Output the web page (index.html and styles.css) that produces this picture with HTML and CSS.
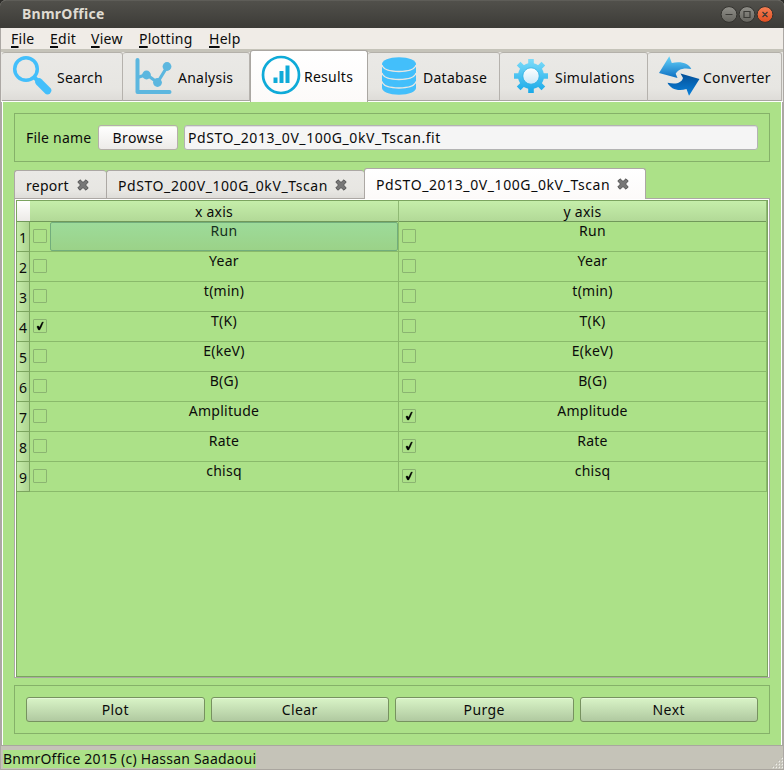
FILE: index.html
```html
<!DOCTYPE html>
<html lang="en">
<head>
<meta charset="utf-8">
<title>BnmrOffice</title>
<link rel="stylesheet" href="styles.css">
</head>
<body>
<svg class="defs" width="0" height="0">
  <defs>
    <symbol id="close" viewBox="0 0 12 12"><path d="M3 .8 6 3.500 9 .8 11.200 3 8.500 6l2.700 3L9 11.200 6 8.500l-3 2.700L.8 9l2.700-3L.8 3z" fill="#777" stroke="#555" stroke-width="1" stroke-linejoin="round"/></symbol>
    <symbol id="tick" viewBox="0 0 14 14"><path d="M4.3 7.1 6 7.3l.5 1.2L9 3.3l1.4-.3L8.3 8 6.700 11H5.500L4 8z" fill="#000" stroke="#000" stroke-width=".4"/></symbol>
  </defs>
</svg>
<div class="window">
  <header class="titlebar">
    <span class="title">BnmrOffice</span>
    <svg class="controls" width="54" height="18" viewBox="0 0 54 18">
      <defs>
        <linearGradient id="btn" x2="0" y2="1"><stop stop-color="#91908a"/><stop offset="1" stop-color="#65645e"/></linearGradient>
        <linearGradient id="btnx" x2="0" y2="1"><stop stop-color="#f58055"/><stop offset="1" stop-color="#e04d20"/></linearGradient>
      </defs>
      <g stroke="#32312d"><circle cx="9" cy="8.500" r="7.900" fill="url(#btn)"/><circle cx="27" cy="8.500" r="7.900" fill="url(#btn)"/><circle cx="45" cy="8.500" r="7.900" fill="url(#btnx)"/></g>
      <path d="M5.500 8.500h7M24 5.500h6v6h-6zM42.500 6l5 5m0-5-5 5" fill="none" stroke="#3c3b37" stroke-width="1.2"/>
    </svg>
  </header>
  <nav class="menubar">
    <span class="m1"><u>F</u>ile</span><span class="m2"><u>E</u>dit</span><span class="m3"><u>V</u>iew</span><span class="m4"><u>P</u>lotting</span><span class="m5"><u>H</u>elp</span>
  </nav>
  <div class="maintabs">
    <div class="tab search">
      <svg width="42" height="42" viewBox="0 0 42 42"><circle cx="14" cy="14" r="11.3" fill="none" stroke="#43bffb" stroke-width="3.5"/><path d="m22 22 4 4" stroke="#43bffb" stroke-width="4"/><path d="m27 27 8.500 8.500" stroke="#43bffb" stroke-width="7.500" stroke-linecap="round"/></svg>
      <span>Search</span>
    </div>
    <div class="tab analysis">
      <svg width="38" height="38" viewBox="0 0 38 38" stroke="#5cb7df" fill="none" stroke-linecap="round" stroke-linejoin="round"><path d="M2.500 3v32h32" stroke-width="4"/><path d="m4 20 7.500-2.500 11 8L32 10" stroke-width="3.200"/><g fill="#5cb7df" stroke="none"><circle cx="11.500" cy="18" r="4.400"/><circle cx="22.500" cy="25.500" r="4.400"/><circle cx="32" cy="9.500" r="4.400"/></g></svg>
      <span>Analysis</span>
    </div>
    <div class="tab results active">
      <svg width="40" height="40" viewBox="0 0 40 40"><circle cx="20" cy="20" r="18" fill="none" stroke="#0eaad8" stroke-width="2.700"/><path d="M12.500 22.500h4v5.500h-4zM18.500 16h4v12h-4zM24.500 10.500h4V28h-4z" fill="#0eaad8"/></svg>
      <span>Results</span>
    </div>
    <div class="tab database">
      <svg width="34" height="38" viewBox="0 0 34 38"><path d="M0 7C0 3.500 7 .3 17 .3S34 3.500 34 7v24c0 3.500-7 6.700-17 6.700S0 34.500 0 31z" fill="#43bffb"/><path d="M0 8c1 4.500 8 6.500 17 6.500S33 12.500 34 8M0 16c1 4.500 8 6.500 17 6.500s16-2 17-6.500M0 24.500C1 29 8 31 17 31s16-2 17-6.500" fill="none" stroke="#e8e7e3" stroke-width="1.300"/></svg>
      <span>Database</span>
    </div>
    <div class="tab simulations">
      <svg width="34" height="34" viewBox="-17 -17 34 34">
        <defs>
          <linearGradient id="gear" gradientUnits="userSpaceOnUse" x1="0" x2="0" y1="-17" y2="17"><stop stop-color="#7ddcf9"/><stop offset="1" stop-color="#18a9e8"/></linearGradient>
          <linearGradient id="hub" x2="0" y2="1"><stop stop-color="#fff"/><stop offset="1" stop-color="#cbe7f7"/></linearGradient>
        </defs>
        <g fill="url(#gear)"><circle r="13"/><path d="M-2.800-17h5.600v6h-5.600zM-2.800 11h5.600v6h-5.600zM-17-2.800h6v5.600h-6zM11-2.800h6v5.600h-6zM-10.500-14.200l5 5-3.700 3.700-5-5zM10.500-14.200l3.700 3.700-5 5-3.700-3.700zM-14.200 10.500l5-5 3.700 3.700-5 5zM14.200 10.500l-3.700 3.700-5-5 3.700-3.700z"/></g>
        <circle r="8.200" fill="url(#hub)" stroke="#2aaee2" stroke-width=".8"/>
      </svg>
      <span>Simulations</span>
    </div>
    <div class="tab converter">
      <svg width="41" height="40" viewBox="0 0 41 40">
        <defs>
          <linearGradient id="up" x2="0" y2="1"><stop stop-color="#66d5fb"/><stop offset="1" stop-color="#0d6fc2"/></linearGradient>
          <linearGradient id="down" x2="0" y2="1"><stop stop-color="#044f97"/><stop offset="1" stop-color="#0a82dc"/></linearGradient>
        </defs>
        <path d="M10.300.2 0 17l18.500 5-1.800-4.200c2-4 7-6.500 15.600-4.800C30 7.500 22 4.800 12.800 7z" fill="url(#up)"/>
        <path d="m30 39.800 10.500-16.900-19-5.400 2.500 4.500c-1.500 5-7 6.700-15.500 4.700C11.500 33 19 35.500 27.500 33z" fill="url(#down)"/>
      </svg>
      <span>Converter</span>
    </div>
  </div>
  <main class="page">
    <section class="group file">
      <label class="t-file">File name</label>
      <button class="browse"><span>Browse</span></button>
      <div class="field"><span>PdSTO_2013_0V_100G_0kV_Tscan.fit</span></div>
    </section>
    <div class="doctabs">
      <div class="doc d1"><span>report</span><svg width="12" height="12"><use href="#close"/></svg></div>
      <div class="doc d2"><span>PdSTO_200V_100G_0kV_Tscan</span><svg width="12" height="12"><use href="#close"/></svg></div>
      <div class="doc d3 active"><span>PdSTO_2013_0V_100G_0kV_Tscan</span><svg width="12" height="12"><use href="#close"/></svg></div>
    </div>
    <div class="pane">
      <div class="grid">
        <div class="row head"><i class="corner"></i><b class="c1">x axis</b><b class="c2">y axis</b></div>
        <div class="row"><i>1</i><div class="cell"><em></em><p class="sel"><span>Run</span></p></div><div class="cell"><em></em><p><span>Run</span></p></div></div>
        <div class="row"><i>2</i><div class="cell"><em></em><p>Year</p></div><div class="cell"><em></em><p>Year</p></div></div>
        <div class="row"><i>3</i><div class="cell"><em></em><p>t(min)</p></div><div class="cell"><em></em><p>t(min)</p></div></div>
        <div class="row"><i>4</i><div class="cell"><em><svg width="14" height="14"><use href="#tick"/></svg></em><p>T(K)</p></div><div class="cell"><em></em><p>T(K)</p></div></div>
        <div class="row"><i>5</i><div class="cell"><em></em><p>E(keV)</p></div><div class="cell"><em></em><p>E(keV)</p></div></div>
        <div class="row"><i>6</i><div class="cell"><em></em><p>B(G)</p></div><div class="cell"><em></em><p>B(G)</p></div></div>
        <div class="row"><i>7</i><div class="cell"><em></em><p>Amplitude</p></div><div class="cell"><em><svg width="14" height="14"><use href="#tick"/></svg></em><p>Amplitude</p></div></div>
        <div class="row"><i>8</i><div class="cell"><em></em><p>Rate</p></div><div class="cell"><em><svg width="14" height="14"><use href="#tick"/></svg></em><p>Rate</p></div></div>
        <div class="row"><i>9</i><div class="cell"><em></em><p>chisq</p></div><div class="cell"><em><svg width="14" height="14"><use href="#tick"/></svg></em><p>chisq</p></div></div>
      </div>
    </div>
    <section class="group actions">
      <button>Plot</button><button>Clear</button><button>Purge</button><button>Next</button>
    </section>
  </main>
  <footer class="status">
    <span>BnmrOffice 2015 (c) Hassan Saadaoui</span>
    <svg width="12" height="12" viewBox="0 0 12 12"><path d="M10 1.500h2M7 4.500h2M10 4.500h2M4 7.500h2M7 7.500h2M10 7.500h2M1 10.500h2M4 10.500h2M7 10.500h2M10 10.500h2" stroke="#f0efe9" stroke-width="1.500"/><path d="M10 1h1M7 4h1M10 4h1M4 7h1M7 7h1M10 7h1M1 10h1M4 10h1M7 10h1M10 10h1" stroke="#a3a198"/></svg>
  </footer>
</div>
</body>
</html>
```
FILE: styles.css
```css
* { box-sizing: border-box; }
body { margin: 0; font: 14px/20px "Noto Sans", "Open Sans", sans-serif; letter-spacing: .25px; color: #0b0b0b; background: #aca8a4; }
svg { display: block; flex: none; }
.defs { position: absolute; }
.window { width: 784px; height: 770px; display: flex; flex-direction: column; overflow: hidden; white-space: nowrap; }
.titlebar { height: 28px; flex: none; display: flex; justify-content: space-between; align-items: center; padding: 0 10px 0 22px; background: linear-gradient(#51504b, #3c3b37); border-top: 1px solid #5e5d58; border-radius: 6px 6px 0 0; box-shadow: 0 0 0 6px #2d2c29; z-index: 1; clip-path: inset(0); }
.title { color: #dfdbd2; font-weight: 700; font-size: 14px; margin-top: -1px; }
.menubar { height: 21px; flex: none; margin: 0 1px; background: #f0ece7; display: flex; padding: 1px 0 0 10px; z-index: 2; }
.menubar span { flex: none; }
.menubar u { text-decoration-thickness: 2px; text-underline-offset: 2px; text-decoration-skip-ink: none; }
.m1 { width: 39px; } .m2 { width: 41px; } .m3 { width: 48px; } .m4 { width: 70px; }
.maintabs { height: 53px; flex: none; display: flex; align-items: flex-end; padding: 0 1px; background: linear-gradient(#c5c3b9 0 3px, #e8e7e3 3px 52px, #fff 52px); margin: 0 1px; }
.tab { height: 49px; margin-bottom: 1px; display: flex; align-items: center; border-top: 1px solid #b4b1aa; border-bottom: 1px solid #a9a6a1; border-right: 1px solid #b5b2ad; background: linear-gradient(#eae9e6, #e7e6e2 75%, #dedcd8); border-radius: 3px 3px 0 0; }
.tab svg { margin-top: -1px; }
.tab span { margin-top: 3px; }
.search { width: 121px; padding-left: 10px; }
.search span { margin-left: 3px; }
.analysis { width: 127px; padding-left: 12px; }
.analysis span { margin-left: 5px; }
.results { width: 118px; padding-left: 10px; }
.results span { margin: 2px 0 0 3px; }
.tab.active { height: 52px; margin-bottom: 0; padding-bottom: 2px; border: 1px solid #aaa7a2; border-width: 1px 1px 0; background: linear-gradient(#fff, #fcfaf9); }
.database { width: 132px; padding-left: 14px; }
.database span { margin-left: 7px; }
.simulations { width: 148px; padding-left: 14px; }
.simulations span { margin-left: 7px; }
.converter { flex: 1; padding-left: 11px; }
.converter span { margin-left: 3px; }
.page { flex: none; height: 643px; margin: 0 2px; padding: 11px 11px 0; border: 1px solid #fff; border-width: 0 1px; background: #ace188; }
.group { height: 49px; border: 1px solid #85b169; padding: 0 11px; display: flex; align-items: center; }
.file label { width: 72px; letter-spacing: .2px; }
button { font: inherit; letter-spacing: inherit; color: inherit; padding: 0; height: 25px; border: 1px solid #779260; border-radius: 3px; background: linear-gradient(#d9f4c7, #b0c9a0); box-shadow: inset 0 1px #e5f8d8; line-height: 23px; }
.browse { width: 80px; border-color: #b5afaa; background: linear-gradient(#fff, #edebe8); flex: none; letter-spacing: .4px; }
.field { flex: 1; margin-left: 6px; height: 25px; border: 1px solid #b3b3b3; border-radius: 3px; background: #f5f5f5; padding: 0 3px; line-height: 24px; letter-spacing: .56px; box-shadow: inset 0 1px #e0e0e0; }
.doctabs { position: relative; z-index: 1; margin-top: 6px; height: 31px; display: flex; align-items: flex-end; }
.doc { height: 29px; border: 1px solid #aca8a4; border-right-width: 0; border-radius: 3px 3px 0 0; background: linear-gradient(#eae9e6, #e7e6e2 75%, #dedcd8); display: flex; align-items: center; padding: 2px 17px 0 11px; justify-content: space-between; }
.doc svg { margin-top: -2px; }
.d1 { width: 92px; } .d2 { width: 258px; letter-spacing: .58px; }
.doc.active { width: 282px; height: 31px; border-width: 1px 1px 0; padding-bottom: 1px; padding-right: 16px; letter-spacing: .59px; background: linear-gradient(#fff, #fcfaf9); }
.pane { height: 480px; border: 1px solid #aca8a4; margin-top: -1px; padding: 1px 1px 0; background: #fff; }
.grid { height: 477px; border: 1px solid #7ba45f; background: #ace188; }
.row { height: 30px; display: grid; grid-template-columns: 13px 369px 1fr; }
.row i { font-style: normal; border-right: 1px solid #7ba45f; border-bottom: 1px solid #7ba45f; background: linear-gradient(90deg, #c5eca9, #aed491); text-align: center; line-height: 32px; height: 30px; letter-spacing: 0; }
.head { height: 21px; background: linear-gradient(#c5eeaa, #b2d997); border-bottom: 1px solid #71985a; }
.head b { font-weight: 400; text-align: center; line-height: 21px; border-right: 1px solid #8fb974; }
.head .corner { height: 20px; background: linear-gradient(#fff, #eceae7); border: 0; }
.cell { display: flex; border-right: 1px solid #8aba6b; border-bottom: 1px solid #8aba6b; padding-left: 3px; }
.cell em { width: 14px; height: 14px; margin: 7px 3px 0 0; border: 1px solid #8bb471; border-radius: 1px; }
.cell em svg { margin: -1px; }
.cell p { margin: 0; flex: 1; text-align: center; line-height: 18px; }
.cell .sel { background: linear-gradient(#9ddb9a, #9bd288); border: 1px solid #72ad7c; border-radius: 2px; line-height: 16px; color: #163020; }
.actions { margin-top: 7px; gap: 6px; }
.actions button { flex: 1; line-height: 24px; letter-spacing: .4px; }
.status { flex: 1; margin: 0 1px; background: #c5c3b8; border-top: 1px solid #a9a79f; border-bottom: 1px solid #aaa69f; display: flex; justify-content: space-between; align-items: flex-end; }
.status span { margin: 0 0 1px 2px; width: 253px; height: 18px; line-height: 18px; letter-spacing: .21px; background: #ace188; }
```
